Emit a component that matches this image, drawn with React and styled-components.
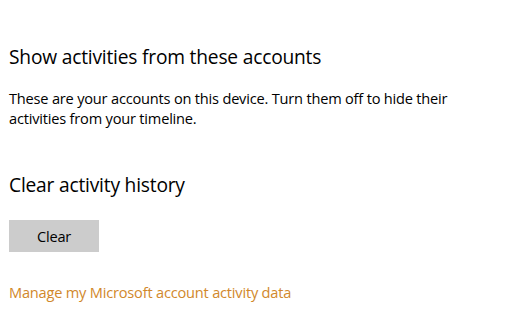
import React from "react";
import styled, { createGlobalStyle } from "styled-components";

const Global = createGlobalStyle`
  html, body { margin: 0; padding: 0; background: #fff; }
  body { font-family: "Open Sans", "Noto Sans", sans-serif; color: #000; }
`;

const Page = styled.div`
  width: 521px;
  height: 316px;
  box-sizing: border-box;
  padding: 43px 0 0 9px;
  display: flex;
  flex-direction: column;
  align-items: flex-start;
`;

const Heading = styled.h2`
  margin: ${(p) => p.$top || 0}px 0 0 0;
  font-size: 19.2px;
  font-weight: 400;
  line-height: 28px;
  letter-spacing: -0.2px;
`;

const Body = styled.p`
  margin: 17px 0 0 0;
  font-size: 14.6px;
  line-height: 20px;
  width: 470px;
  letter-spacing: -0.2px;
`;

const Button = styled.button`
  margin-top: 21px;
  width: 90px;
  height: 32px;
  border: none;
  background: #cccccc;
  font-family: inherit;
  font-size: 14.6px;
  letter-spacing: -0.2px;
  color: #000;
  padding: 0;
`;

const Link = styled.a`
  margin-top: 30px;
  font-size: 14.6px;
  line-height: 20px;
  color: #d1882b;
  text-decoration: none;
  letter-spacing: -0.2px;
`;

export default function App() {
  return (
    <>
      <Global />
      <Page>
        <Heading>Show activities from these accounts</Heading>
        <Body>
          These are your accounts on this device. Turn them off to hide their
          activities from your timeline.
        </Body>
        <Heading $top={43}>Clear activity history</Heading>
        <Button>Clear</Button>
        <Link href="#">Manage my Microsoft account activity data</Link>
      </Page>
    </>
  );
}
